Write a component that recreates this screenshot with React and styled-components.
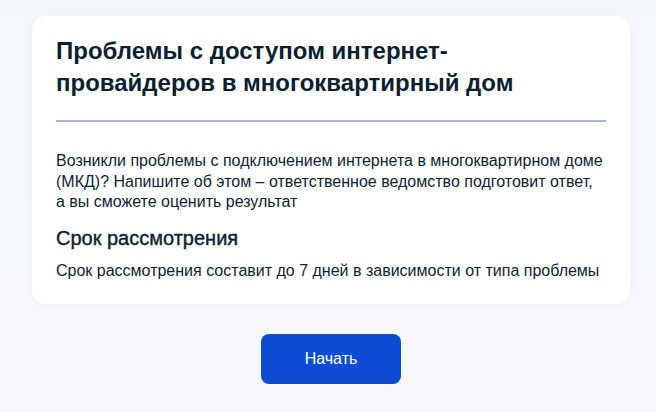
import React from 'react';
import styled, { createGlobalStyle } from 'styled-components';

const GlobalStyle = createGlobalStyle`
    html, body {
        margin: 0;
        padding: 0;
        background: #f3f6fb;
    }
    body {
        font-family: "Liberation Sans", Arial, sans-serif;
        color: #0b1f33;
    }
`;

const App = () => (
    <>
        <GlobalStyle />
        <Page>
            <Card>
                <Title>Проблемы с доступом интернет-провайдеров в многоквартирный дом</Title>
                <Divider />
                <Text>
                    Возникли проблемы с подключением интернета в многоквартирном доме (МКД)? Напишите об этом –
                    ответственное ведомство подготовит ответ,
                    <br />
                    а вы сможете оценить результат
                </Text>
                <Subtitle>Срок рассмотрения</Subtitle>
                <Text>Срок рассмотрения составит до 7 дней в зависимости от типа проблемы</Text>
            </Card>
            <Actions>
                <StartButton type="button">Начать</StartButton>
            </Actions>
        </Page>
    </>
);

const Page = styled.main`
    box-sizing: border-box;
    width: 656px;
    min-height: 412px;
    padding: 16px 26px 0 32px;
    background: linear-gradient(180deg, #f3f6fb 0%, #f6f8fc 100%);
`;

const Card = styled.section`
    box-sizing: border-box;
    width: 598px;
    padding: 19px 24px 23px;
    background: #fff;
    border-radius: 14px;
    box-shadow: 0 2px 12px rgba(11, 31, 51, 0.03);
`;

const Title = styled.h1`
    margin: 0;
    max-width: 470px;
    font-size: 24px;
    line-height: 32px;
    font-weight: 700;
    color: #0b1f33;
`;

const Divider = styled.hr`
    margin: 21px 0 29px;
    height: 2px;
    border: 0;
    background: #a7b7d8;
`;

const Text = styled.p`
    margin: 0;
    font-size: 16px;
    line-height: 20.5px;
    color: #0b1f33;
`;

const Subtitle = styled.h2`
    margin: 12px 0 10px;
    font-size: 20px;
    line-height: 26px;
    font-weight: 400;
    -webkit-text-stroke: 0.4px #0b1f33;
    color: #0b1f33;
`;

const Actions = styled.div`
    display: flex;
    justify-content: center;
    width: 598px;
    padding-top: 30px;
`;

const StartButton = styled.button`
    width: 140px;
    height: 50px;
    border: 0;
    border-radius: 8px;
    background: #0d4cd3;
    color: #fff;
    font-family: "Liberation Sans", Arial, sans-serif;
    font-size: 16px;
    cursor: pointer;
`;

export default App;
